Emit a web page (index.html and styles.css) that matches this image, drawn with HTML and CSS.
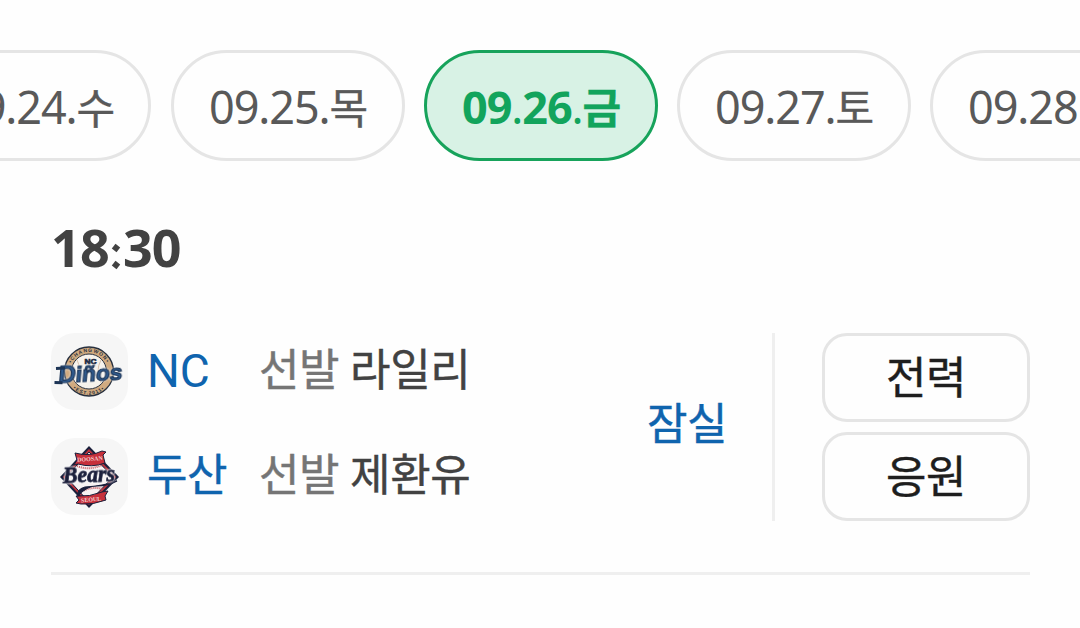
FILE: index.html
```
<!DOCTYPE html>
<html lang="ko">

<head>
    <meta charset="UTF-8">
    <meta name="viewport" content="width=device-width, initial-scale=1.0">
    <title>경기 일정</title>
    <link rel="stylesheet" href="styles.css">
</head>

<body>
    <nav class="dates">
        <a class="date">09.24.<span class="day">수</span></a>
        <a class="date">09.25.<span class="day">목</span></a>
        <a class="date active">09<span class="dot">.</span>26<span class="dot">.</span><span class="day">금</span></a>
        <a class="date">09.27.<span class="day">토</span></a>
        <a class="date">09.28.<span class="day">일</span></a>
    </nav>

    <main class="game">
        <h2 class="time">18<span class="colon">:</span>30</h2>

        <div class="match">
            <div class="teams">
                <div class="team">
                    <div class="emblem">
                        <!-- NC Dinos -->
                        <svg viewBox="0 0 77 77">
                            <circle cx="38" cy="38.5" r="24.5" fill="#d0aa80" stroke="#27303f" stroke-width="1.3" />
                            <circle cx="38" cy="38.5" r="17.5" fill="#f6f2ec" stroke="#27303f" stroke-width="1" />
                            <path d="M26 27q6 11 0 23M50 27q-6 11 0 23" fill="none" stroke="#d9c3ad" stroke-width="1" />
                            <path id="ncTop" d="M18.5 38.5a19.5 19.5 0 0 1 39 0" fill="none" />
                            <path id="ncBottom" d="M14.8 38.5a23.2 23.2 0 0 0 46.4 0" fill="none" />
                            <text class="ring"><textPath href="#ncTop" startOffset="50%">•CHANGWON•</textPath></text>
                            <text class="ring"><textPath href="#ncBottom" startOffset="50%">•EST.2011•</textPath></text>
                            <text class="nc" x="39.5" y="31" textLength="12" lengthAdjust="spacingAndGlyphs">NC</text>
                            <g transform="translate(7 50) rotate(-3) skewX(-8)">
                                <text class="dinos" x="0" y="0" textLength="64" lengthAdjust="spacingAndGlyphs"><tspan class="big">D</tspan>iños</text>
                            </g>
                            <path d="M5 35.500l9-.5M3.500 49.500l8 .2" stroke="#1d3455" stroke-width="3" />
                        </svg>
                    </div>
                    <a class="name latin">NC</a>
                    <p class="starter"><span class="label">선발</span> 라일리</p>
                </div>
                <div class="team">
                    <div class="emblem">
                        <!-- Doosan Bears -->
                        <svg viewBox="0 0 77 77">
                            <path d="M38 8l30 31-30 31L9 39z" fill="#1b1f3b" />
                            <path d="M38 11l27 28-27 28L12 39z" fill="#b9323c" />
                            <path d="M38 14l24 25-24 25L15 39z" fill="#f7f2f2" stroke="#1b1f3b" stroke-width="1" />
                            <path d="M26 28q12 5 25-1M29 54q12-6 23-3" fill="none" stroke="#c85b62" stroke-width="2" stroke-dasharray="1 1" />
                            <path d="M24 15q15 4 27-2l4 1-3 3 2 8q-13 5-27 1l-4 1 3-5z" fill="#c6303b" stroke="#1b1f3b" stroke-width="1" />
                            <path d="M25 58q14 1 26-4l6-1-3 5 1 4q-13 5-25 4l-5-1 3-3z" fill="#c6303b" stroke="#1b1f3b" stroke-width="1" />
                            <text class="ribbon" x="39" y="23" transform="rotate(-4 38 22)">DOOSAN</text>
                            <text class="ribbon" x="40" y="63.5" transform="rotate(-5 40 61)">SEOUL</text>
                            <path d="M66 43q-9 5-20 5t-19 10q-1-7 7-9 18-1 32-6z" fill="#1b1f3b" stroke="#1b1f3b" stroke-width="1.2" />
                            <text class="bears" x="12" y="44" textLength="52" lengthAdjust="spacingAndGlyphs" transform="rotate(-2 38 40)">Bears</text>
                        </svg>
                    </div>
                    <a class="name">두산</a>
                    <p class="starter"><span class="label">선발</span> 제환유</p>
                </div>
            </div>
            <a class="stadium">잠실</a>
            <div class="actions">
                <button type="button">전력</button>
                <button type="button">응원</button>
            </div>
        </div>
    </main>
</body>

</html>
```

FILE: styles.css
```
* {
    box-sizing: border-box;
}

body {
    margin: 0;
    background-color: #fefefe;
    color: #424242;
    font-family: "Noto Sans CJK KR", sans-serif;
    overflow: hidden;
}

.dates {
    display: flex;
    justify-content: center;
    gap: 19px;
    margin-top: 50px;
    padding-left: 2px;
    overflow: hidden;
}

.date {
    flex: none;
    display: flex;
    align-items: center;
    width: 234px;
    height: 111px;
    padding: 2px 0 0 35px;
    border: 3px solid #e5e5e5;
    border-radius: 56px;
    color: #595959;
    font-family: "Noto Sans", "Noto Sans CJK KR", sans-serif;
    font-size: 45px;
    letter-spacing: -1.1px;
    line-height: 60px;
}

.date:first-child {
    width: 233px;
}

.day {
    padding-bottom: 2px;
    font-family: "Noto Sans CJK KR", sans-serif;
    font-size: 42px;
    -webkit-text-stroke: 0.4px;
}

.date.active {
    background-color: #d8f2e5;
    border-color: #17a35b;
    color: #12a45c;
    font-weight: 700;
}

.dates .date + .date {
    margin-left: 0;
}

.dates .date:first-child + .date {
    margin-left: 1px;
}

.dot {
    font-weight: 400;
}

.game {
    margin: 0 50px 0 51px;
    padding: 51px 0;
    border-bottom: 3px solid #efefef;
}

.time {
    display: flex;
    margin: 0;
    font-family: "Noto Sans", sans-serif;
    font-size: 52px;
    font-weight: 700;
    line-height: 70px;
    letter-spacing: -0.8px;
}

/* diamond-shaped separator */
.colon {
    position: relative;
    width: 14px;
    color: transparent;
}

.colon::before,
.colon::after {
    content: "";
    position: absolute;
    left: 4px;
    width: 6px;
    height: 6px;
    background-color: #424242;
    transform: rotate(38deg);
}

.colon::before {
    top: 33px;
}

.colon::after {
    top: 50px;
}

.match {
    display: flex;
    margin-top: 51px;
    height: 188px;
}

.teams {
    display: flex;
    flex-direction: column;
    gap: 28px;
    width: 596px;
}

.team {
    display: flex;
    align-items: center;
    height: 77px;
}

.emblem {
    width: 77px;
    height: 77px;
    margin-right: 19px;
    border-radius: 24px;
    background-color: #f6f6f6;
}

.emblem svg {
    display: block;
}

.ring {
    font: 700 5px "Liberation Sans", sans-serif;
    letter-spacing: 1px;
    text-anchor: middle;
    fill: #27303f;
}

.nc {
    font: 700 8px "Liberation Sans", sans-serif;
    text-anchor: middle;
    fill: #1d2a43;
    stroke: #1d2a43;
    stroke-width: .7px;
}

.dinos {
    font: 700 22px "Liberation Sans", sans-serif;
    fill: #315d91;
    stroke: #1d3455;
    stroke-width: 1.2px;
    filter: drop-shadow(0 0 .8px #fff);
}

.dinos .big {
    font-size: 23px;
}

.ribbon {
    font: 700 6px "Liberation Serif", serif;
    text-anchor: middle;
    fill: #f4cfd1;
}

.bears {
    font: italic 700 24px "Liberation Serif", serif;
    fill: #1b1f3b;
    stroke: #1b1f3b;
    stroke-width: .8px;
    filter: drop-shadow(0 0 1px #fff) drop-shadow(0 0 .6px #fff);
}

.name,
.starter,
.stadium {
    padding-bottom: 9px;
    font-size: 44px;
    line-height: 64px;
    letter-spacing: -0.4px;
    -webkit-text-stroke: 0.4px;
}

.name {
    width: 112px;
    color: #0f64ae;
}

.latin {
    padding-bottom: 2px;
    font-family: Roboto, sans-serif;
    font-size: 46px;
    letter-spacing: 0;
    -webkit-text-stroke: 0;
}

.starter {
    margin: 0;
    word-spacing: -1px;
}

.label {
    color: #757575;
}

.stadium {
    align-self: center;
    width: 125px;
    padding-bottom: 12px;
    color: #0f64ae;
}

.actions {
    display: flex;
    flex-direction: column;
    gap: 10px;
    padding-left: 47px;
    border-left: 3px solid #efefef;
}

.actions button {
    width: 208px;
    height: 89px;
    padding: 0 0 6px;
    border: 3px solid #e5e5e5;
    border-radius: 25px;
    background-color: #fefefe;
    color: #1e1e1e;
    font-family: inherit;
    font-size: 44px;
    letter-spacing: -0.5px;
    -webkit-text-stroke: 0.4px;
}
```
